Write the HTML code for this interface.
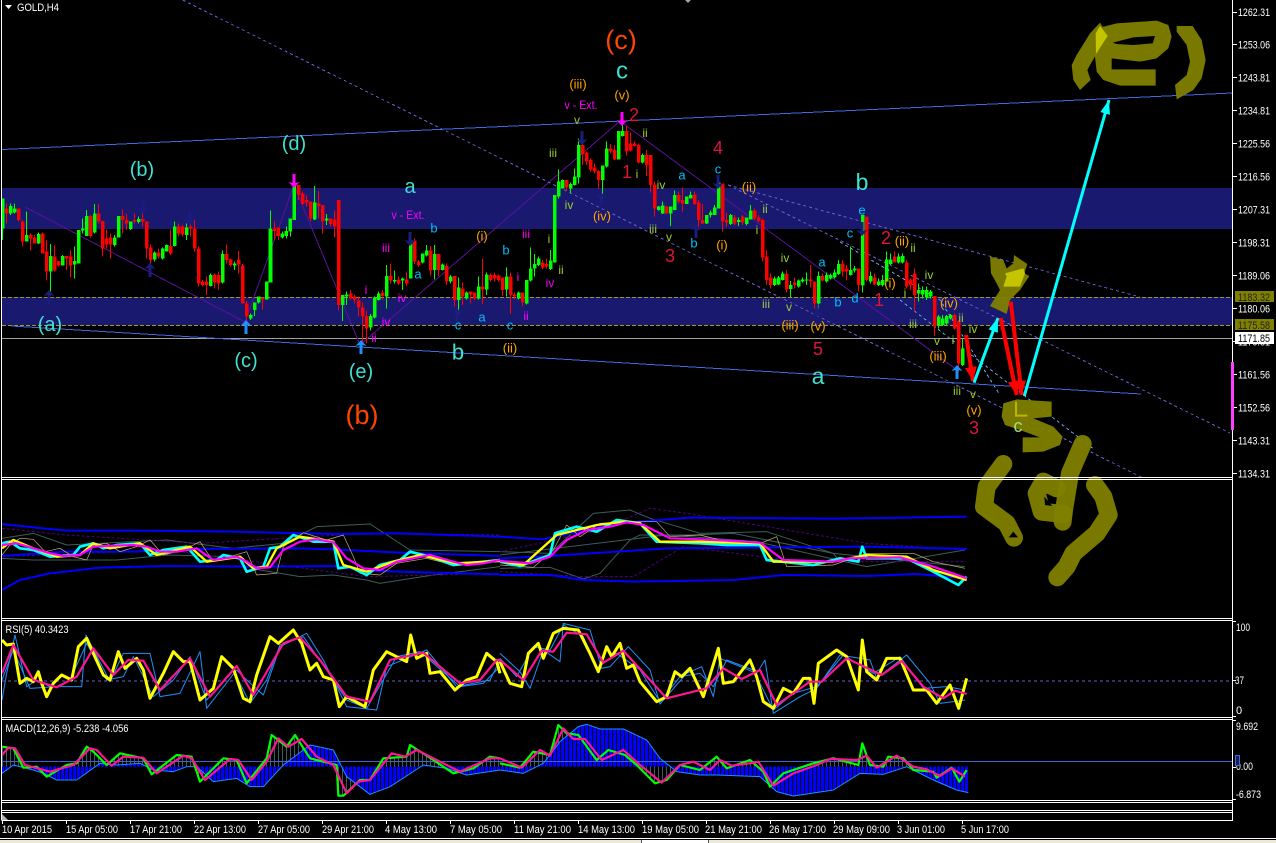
<!DOCTYPE html>
<html><head><meta charset="utf-8"><title>GOLD,H4</title>
<style>
html,body{margin:0;padding:0;background:#000;width:1276px;height:843px;overflow:hidden}
svg{display:block}
text{font-family:"Liberation Sans",sans-serif}
.c path{fill:none;shape-rendering:crispEdges}
.gb{stroke:#0f0;stroke-width:9.8}.rb{stroke:#f00;stroke-width:9.8}
.gw{stroke:#0f0;stroke-width:3.3}.rw{stroke:#f00;stroke-width:3.3}
.l text{text-anchor:middle;dominant-baseline:central}
.t{fill:#40e0d0;font-size:20px}.o{fill:#ff4500;font-size:27px}
.a{fill:#ffa500;font-size:13px}.r{fill:#dc143c;font-size:18px}
.y{fill:#9acd32;font-size:12px}.s{fill:#00bfff;font-size:13px}.m{fill:#f0f;font-size:12px}
.ax text{fill:#fff;font-size:11px}
.i path{fill:none;stroke-linejoin:round}
.ol{fill:#808000;opacity:.95}
.ols{fill:none;stroke:#808000;stroke-width:54;stroke-linecap:round;stroke-linejoin:round;opacity:.95}
.cr{shape-rendering:crispEdges}
</style></head><body>
<svg width="1276" height="843" viewBox="0 0 1276 843" xmlns="http://www.w3.org/2000/svg">
<defs>
<path id="up" d="M0 0L5.5 6L1.5 5V14H-1.5V5L-5.5 6Z"/>
<path id="dn" d="M0 0L5.5-6L1.5-5V-14H-1.5V-5L-5.5-6Z"/>
<pattern id="hb" patternUnits="userSpaceOnUse" width="12" height="12"><rect x="3" width="9" height="12" fill="#00f"/></pattern>
<pattern id="hg" patternUnits="userSpaceOnUse" width="12" height="12"><rect x="6" width="3" height="12" fill="#3d5c5c"/></pattern>
<marker id="mr" markerUnits="userSpaceOnUse" markerWidth="14" markerHeight="16" refX="14" refY="6" orient="auto"><path d="M0 0L14 6L0 12Z" fill="#f00"/></marker>
<marker id="mc" markerUnits="userSpaceOnUse" markerWidth="14" markerHeight="16" refX="14" refY="5" orient="auto"><path d="M0 0L14 5L0 10Z" fill="#0ff"/></marker>
</defs>
<rect width="1276" height="843" fill="#000"/>

<!-- bands -->
<rect x="2" y="188" width="1230" height="41" fill="#191970"/>
<rect x="2" y="297" width="1230" height="28.5" fill="#191970"/>
<path class="cr" d="M2 297.5H1232M2 325.5H1232" stroke="#a09a20" stroke-width="1" stroke-dasharray="4 2" fill="none"/>
<path class="cr" d="M2 338.5H1232" stroke="#a0a0a0" stroke-width="1" fill="none"/>

<!-- zigzag -->
<path class="cr" d="M25 207L245 322L294 185L360 345L620 121L957 370" fill="none" stroke="#5a109a" stroke-width="1"/>

<!-- dashed channels -->
<g class="cr" fill="none" stroke="#6a5acd" stroke-width="1" stroke-dasharray="3 3">
<path d="M182.7 0L1143 478"/><path d="M728 185L1140 297"/><path d="M728 185L1230 433"/>
<path d="M840 242L940 300L1000 395" stroke="#6aa8e8"/><path d="M900 300L1095 450" stroke="#6aa8e8"/>
</g>
<path class="cr" d="M2 149.5L1232 93M11 326L1141 394" fill="none" stroke="#4169e1" stroke-width="1"/>

<!-- candles -->
<g class="c">
<g transform="scale(.33333)">
<path class="gw" d="M8 595V720M32 610V645M44 610V640M80 635V725M116 697V732M188 765V797M224 740V835M248 655V700M260 630V708M284 612V700M344 705V740M392 665V690M416 650V670M464 755V785M488 742V778M500 733V755M524 665V740M560 670V720M812 632V760M848 695V715M860 680V715M872 655V710M944 558V660M980 642V675"/>
<path class="rw" d="M20 610V670M56 625V665M68 660V740M92 700V752M104 705V730M128 697V760M164 735V815M176 783V800M200 768V810M212 750V833M272 645V712M296 612V670M308 663V770M320 688V745M332 700V775M368 628V700M380 640V690M404 640V670M428 612V680M440 665V775M452 733V800M476 745V775M512 688V765M536 670V710M548 675V710M572 655V710M584 660V755M823 665V720M835 683V720M896 555V600M908 575V615M920 585V620M932 605V665M956 573V655M968 615V700M992 655V680M1004 632V712"/>
<path class="gb" d="M8 595V685M32 618V640M44 625V638M80 705V725M116 702V730M188 768V797M224 783V793M236 690V790M248 685V692M260 648V708M284 640V697M344 712V735M356 648V712M392 665V687M416 657V666M464 757V778M488 745V775M500 735V755M524 680V738M560 682V705M811 685V848M847 700V712M859 693V708M871 655V695M883 555V660M944 608V658M980 655V662"/>
<path class="rb" d="M20 625V640M56 625V660M68 665V725M92 705V715M104 712V730M128 700V760M164 770V812M176 783V797M200 768V775M212 770V797M272 648V708M296 640V665M308 663V745M320 715V733M332 712V733M368 648V660M380 660V670M404 660V665M428 657V665M440 665V745M452 742V780M476 758V770M512 738V760M536 680V700M548 680V703M572 680V685M584 685V745M823 685V693M835 683V708M896 555V585M908 580V612M920 600V607M932 605V655M956 610V618M968 615V665M992 655V672M1004 658V680"/>
</g>
<g transform="translate(0 240) scale(.33333)">
<path class="gw" d="M152 12V155M632 100V140M668 32V130M704 65V90M752 220V240M764 188V228M776 170V190M800 125V178M1028 165V243M1040 155V195M1112 222V272M1124 170V235M1136 155V182M1160 75V205M1184 92V130M1208 112V150"/>
<path class="rw" d="M140 0V122M596 20V140M608 120V140M620 110V165M644 100V145M656 95V150M680 13V70M692 55V80M716 33V100M728 72V190M740 183V260M788 172V208M1016 -120V212M1052 150V178M1064 165V190M1076 170V230M1088 187V305M1100 213V310M1148 150V180M1172 70V130M1196 110V135M1220 95V140M1244 -5V72M1256 60V80"/>
<path class="gb" d="M152 48V95M632 105V138M668 42V128M704 70V76M752 225V235M764 188V210M776 170V188M800 125V178M812 -30V128M1028 165V195M1040 163V170M1112 228V262M1124 172V232M1136 160V180M1160 108V170M1184 120V125M1208 116V122M1232 2V115"/>
<path class="rb" d="M140 35V95M596 25V130M608 125V135M620 125V135M644 105V128M656 105V130M680 42V60M692 58V75M716 58V73M728 77V190M740 190V230M788 172V178M1016 -120V195M1052 160V175M1064 170V178M1076 182V202M1088 202V230M1100 228V265M1148 158V168M1172 108V122M1196 118V130M1220 118V130M1244 2V65M1256 65V75"/>
</g>
<g transform="translate(420 0) scale(.33333)">
<path class="gw" d="M416 508V595M428 538V565M452 548V580M464 505V557M476 415V550M548 497V593M560 425V502M608 375V410M668 460V490M716 618V632M728 605V642M752 620V678M764 572V630M812 575V595M860 645V672M872 632V652M884 615V645M932 642V675M956 652V678M980 652V676M992 615V658"/>
<path class="rw" d="M440 540V575M488 405V495M500 455V495M512 475V515M524 490V520M536 510V567M572 432V460M584 435V480M620 378V467M632 397V455M644 425V440M656 430V490M680 450V528M692 465V578M704 545V650M740 618V642M776 575V610M788 563V635M824 575V615M836 600V690M848 612V672M908 550V695M920 638V680M944 645V675M968 645V675M1004 625V660M1016 645V668M1028 655V785"/>
<path class="gb" d="M416 545V590M428 540V565M452 552V565M464 530V555M476 435V533M548 497V540M560 445V500M596 393V478M608 393V408M668 465V488M716 620V630M728 617V640M752 620V640M764 585V630M800 590V612M812 585V595M860 645V670M872 638V645M884 622V645M896 548V625M932 645V672M956 660V666M980 652V672M992 632V658"/>
<path class="rb" d="M440 540V562M488 435V462M500 458V485M512 480V508M524 503V515M536 513V540M572 445V455M584 450V478M620 393V455M632 430V452M644 430V438M656 435V488M680 465V495M692 465V555M704 553V625M740 620V640M776 585V605M788 600V610M824 583V612M836 608V660M848 660V670M908 550V665M920 660V668M944 652V670M968 650V668M1004 632V655M1016 652V663M1028 660V772"/>
</g>
<g transform="translate(420 240) scale(.33333)">
<path class="gw" d="M8 40V70M20 15V50M44 15V118M68 70V92M92 105V130M116 113V220M140 155V178M176 110V178M200 98V165M260 82V170M296 155V178M320 120V193M332 22V125M344 42V110M356 50V78M392 30V90M1064 110V138M1076 108V135M1088 95V122M1112 123V172M1136 118V142M1148 112V128M1160 98V135M1196 95V205M1220 98V128M1232 100V118M1244 88V115M1256 60V105"/>
<path class="rw" d="M32 18V107M56 42V108M80 70V135M104 108V200M128 127V195M152 155V190M164 158V180M188 57V192M212 100V125M224 97V125M236 103V125M248 112V168M272 97V222M284 158V178M308 157V200M368 60V87M380 55V85M1040 30V135M1052 100V145M1100 90V158M1124 113V145M1172 75V142M1184 125V205M1208 100V125"/>
<path class="gb" d="M8 40V68M20 32V47M44 42V90M68 73V90M92 110V125M116 143V180M140 158V175M176 140V175M200 103V148M260 110V148M296 158V175M320 120V190M332 85V122M344 72V85M356 55V75M392 62V87M404 -135V68M1064 115V135M1076 113V133M1088 100V120M1112 135V147M1136 122V140M1148 118V125M1160 118V122M1196 108V190M1220 105V125M1232 105V115M1244 98V113M1256 72V102"/>
<path class="rb" d="M32 32V92M56 42V90M80 78V125M104 108V180M128 145V170M152 155V163M164 158V175M188 140V148M212 105V120M224 105V115M236 107V120M248 112V150M272 110V165M284 163V170M308 157V188M368 68V82M380 72V80M1040 50V120M1052 113V135M1100 102V148M1124 128V135M1172 118V125M1184 125V190M1208 108V122"/>
</g>
<g transform="translate(840 240) scale(.33333)">
<path class="gw" d="M32 20V107M44 78V98M68 -75V158M92 95V130M116 115V138M128 105V140M140 35V125M152 40V75M176 40V70M188 40V70M236 130V185M248 140V175M260 140V180M272 150V175M296 225V265M308 225V258M320 225V255M332 222V238M368 295V378"/>
<path class="rw" d="M8 60V110M20 75V122M56 85V155M80 -70V125M104 100V135M164 35V68M200 60V145M212 115V150M224 85V215M284 168V288M344 220V268M356 240V395"/>
<path class="gb" d="M32 90V105M44 85V92M68 -75V137M92 108V125M116 125V135M128 120V135M140 58V125M152 58V72M176 50V68M188 48V68M236 150V160M248 150V163M260 150V172M272 155V170M296 230V258M308 235V255M320 228V250M332 225V235M368 325V375"/>
<path class="rb" d="M8 70V95M20 85V95M56 85V135M80 -70V120M104 112V133M164 50V68M200 68V140M212 118V135M224 100V165M284 168V260M344 225V265M356 245V370"/>
</g>
</g>

<!-- arrows -->
<g fill="#1c1c80">
<use href="#dn" x="143" y="214"/><use href="#up" x="150" y="263"/><use href="#dn" x="190" y="225"/><use href="#up" x="49" y="290"/>
<use href="#dn" x="410" y="246"/><use href="#dn" x="582" y="145"/><use href="#up" x="601" y="192"/><use href="#dn" x="718" y="189"/>
<use href="#up" x="696" y="224"/><use href="#up" x="457" y="308"/><use href="#dn" x="817" y="318"/><use href="#dn" x="862" y="236"/>
</g>
<g fill="#1e90ff"><use href="#up" x="246" y="320"/><use href="#up" x="361" y="340"/><use href="#up" x="957" y="365"/></g>
<g fill="#f0f"><use href="#dn" x="294" y="188"/><use href="#dn" x="622" y="126"/></g>

<!-- wave labels -->
<g class="l">
<text class="o" x="621" y="40">(c)</text><text class="o" x="362" y="415">(b)</text>
<g class="t"><text x="50" y="325">(a)</text><text x="142" y="170">(b)</text><text x="246" y="361">(c)</text><text x="294" y="144">(d)</text><text x="361" y="372">(e)</text><text x="410" y="187">a</text><text x="458" y="352" style="font-size:22px">b</text><text x="622" y="71" style="font-size:24px">c</text><text x="862" y="182" style="font-size:23px">b</text><text x="818" y="376" style="font-size:23px">a</text></g>
<g class="a"><text x="578" y="84">(iii)</text><text x="622" y="95">(v)</text><text x="602" y="216">(iv)</text><text x="482" y="236">(i)</text><text x="749" y="187">(ii)</text><text x="722" y="245">(i)</text><text x="790" y="325">(iii)</text><text x="818" y="326">(v)</text><text x="510" y="348">(ii)</text><text x="902" y="241">(ii)</text><text x="890" y="283">(i)</text><text x="949" y="303">(iv)</text><text x="938" y="356">(iii)</text><text x="974" y="410">(v)</text></g>
<g class="r"><text x="634" y="115">2</text><text x="627" y="172">1</text><text x="718" y="148">4</text><text x="670" y="256">3</text><text x="818" y="349">5</text><text x="886" y="238">2</text><text x="879" y="300">1</text><text x="974" y="428">3</text></g>
<g class="y"><text x="577" y="120">v</text><text x="553" y="153">iii</text><text x="569" y="205">iv</text><text x="549" y="239">i</text><text x="561" y="270">ii</text><text x="645" y="133">ii</text><text x="637" y="174">i</text><text x="661" y="185">iv</text><text x="653" y="229">iii</text><text x="669" y="237">v</text><text x="765" y="209">ii</text><text x="757" y="230">i</text><text x="785" y="258">iv</text><text x="766" y="304">iii</text><text x="789" y="307">v</text><text x="913" y="248">ii</text><text x="929" y="275">iv</text><text x="905" y="293">i</text><text x="913" y="324">iii</text><text x="937" y="341">v</text><text x="953" y="340">i</text><text x="961" y="318">ii</text><text x="973" y="329">iv</text><text x="957" y="391">iii</text><text x="973" y="394">v</text></g>
<g class="s"><text x="434" y="228">b</text><text x="418" y="274">a</text><text x="506" y="250">b</text><text x="458" y="325">c</text><text x="482" y="317">a</text><text x="510" y="325">c</text><text x="682" y="175">a</text><text x="694" y="243">b</text><text x="718" y="169">c</text><text x="822" y="262">a</text><text x="838" y="302">b</text><text x="850" y="233">c</text><text x="855" y="298">d</text><text x="862" y="210">e</text></g>
<g class="m"><text x="408" y="215" textLength="33" lengthAdjust="spacingAndGlyphs">v - Ext.</text><text x="581" y="105" textLength="33" lengthAdjust="spacingAndGlyphs">v - Ext.</text><text x="386" y="248">iii</text><text x="366" y="290">i</text><text x="402" y="298">iv</text><text x="386" y="322">iv</text><text x="374" y="338">ii</text><text x="518" y="277">i</text><text x="550" y="283">iv</text><text x="526" y="234">iii</text><text x="526" y="316">ii</text></g>
</g>

<!-- indicator panel -->
<g class="i" transform="translate(0 480) scale(.33333)">
<g stroke="#3d5c5c" stroke-width="3"><path d="M6 235L100 240L250 240L350 240L500 225L700 230L780 270L900 290L1000 285L1100 300L1140 310L1300 285L1500 260"/><path d="M6 175L100 160L200 195L500 180L700 205L850 190L950 140L1110 132L1230 210L1500 215"/></g>
<g stroke="#4b0082" stroke-width="3" stroke-dasharray="9 6"><path d="M6 145L200 165L600 190L1100 160L1500 165"/><path d="M6 230L500 210L1100 290L1500 280"/></g>
<g stroke="#00f" stroke-width="6"><path d="M6 132L130 145L200 152L400 152L700 155L1000 162L1200 160L1500 170"/><path d="M6 228L200 215L400 215L600 207L900 205L1000 208L1200 218L1500 228"/><path d="M6 330L60 300L150 280L300 263L500 258L800 260L1000 258L1100 272L1300 278L1500 283"/></g>
<path stroke="#c8b878" stroke-width="2" d="M6 225L30 195L60 175L100 178L135 215L180 205L220 230L260 240L280 195L320 190L360 215L410 200L450 180L490 225L550 210L600 185L640 245L690 230L740 215L770 285L830 280L850 200L910 158L980 180L1030 165L1060 230L1080 280L1140 285L1190 250L1280 235L1340 250L1400 250L1500 240"/>
<path stroke="#0ff" stroke-width="8" d="M6 190L30 185L60 205L100 210L150 230L220 225L240 200L280 190L310 205L350 195L420 190L450 225L490 210L560 200L600 245L650 240L670 225L720 235L740 275L790 260L810 205L840 200L880 165L940 185L1000 185L1015 265L1050 260L1100 285L1140 255L1200 240L1230 215L1290 230L1360 255L1500 240"/>
<path stroke="#ff0" stroke-width="7" d="M6 205L40 180L100 205L170 230L240 225L280 190L330 205L420 190L470 225L570 200L620 245L720 230L760 265L800 260L830 205L900 170L1000 185L1030 255L1100 275L1180 245L1260 225L1370 250L1500 243"/>
<path stroke="#f0f" stroke-width="6.5" d="M6 195L50 190L100 205L150 220L190 228L240 225L280 200L320 198L400 195L440 200L480 215L530 215L590 205L640 240L710 230L740 245L770 265L810 262L850 210L900 185L950 178L1000 187L1040 235L1090 265L1140 270L1190 245L1290 225L1360 245L1400 255L1450 250L1500 240"/>
</g>
<g class="i" transform="translate(500 480) scale(.33333)">
<g stroke="#3d5c5c" stroke-width="3"><path d="M0 265L150 262L250 297L300 280L390 180L420 165L570 165L700 160L1000 220L1020 245"/><path d="M0 215L150 220L280 100L390 90L450 115L600 160L800 155L1000 220L1395 260"/><path d="M0 225L500 165L770 185L1100 260L1395 210"/></g>
<g stroke="#4b0082" stroke-width="3" stroke-dasharray="9 6"><path d="M0 215L300 150L450 85L560 100L1100 190L1395 210"/><path d="M0 275L250 290L400 290L550 200L900 245L1395 245"/></g>
<g stroke="#00f" stroke-width="6"><path d="M0 170L130 178L350 130L570 113L1000 116L1400 110"/><path d="M0 235L150 228L500 205L1100 200L1400 207"/><path d="M0 285L150 285L250 300L400 305L700 300L850 285L1100 288L1250 282L1400 295"/></g>
<path stroke="#c8b878" stroke-width="2" d="M0 255L100 262L160 210L200 135L240 170L300 130L400 125L470 125L510 170L600 165L660 180L770 195L830 170L860 260L1000 255L1100 220L1240 220L1300 245L1395 265"/>
<path stroke="#0ff" stroke-width="8" d="M0 245L60 258L150 225L165 160L230 140L290 155L350 120L420 130L470 185L600 190L680 195L780 195L800 240L940 255L1020 235L1075 245L1087 200L1100 235L1220 235L1300 275L1375 315L1400 290"/>
<path stroke="#ff0" stroke-width="7" d="M0 243L70 255L170 165L290 135L370 125L420 130L480 185L600 185L780 190L820 245L1000 245L1100 225L1220 230L1300 270L1400 300"/>
<path stroke="#f0f" stroke-width="6.5" d="M0 243L90 250L150 230L200 180L260 150L330 140L380 127L430 135L510 175L600 178L680 182L780 188L850 240L1000 245L1050 235L1200 232L1300 260L1400 295"/>
</g>

<!-- RSI -->
<path d="M2 681H1232" stroke="#6a5acd" stroke-width="1" stroke-dasharray="3 3"/>
<g class="i" transform="translate(0 480) scale(.33333)">
<path stroke="#1e90ff" stroke-width="3" d="M6 660L20 580L45 465L80 620L110 600L150 620L245 620L258 465L330 605L370 520L450 520L480 650L540 640L600 515L620 685L710 570L740 600L790 645L840 500L920 460L970 540L1040 680L1130 690L1160 560L1280 510L1370 620L1470 600L1500 540"/>
<path stroke="#1e90ff" stroke-width="3" d="M6 600L40 510L90 625L170 620L210 600L260 490L320 600L370 590L400 530L460 650L520 600L570 530L620 660L700 570L750 670L800 600L840 495L910 470L980 570L1040 660L1100 685L1190 530L1260 515L1380 620L1450 610L1500 560"/>
<path stroke="#ff0" stroke-width="9" d="M6 480L20 495L40 492L60 610L80 595L100 605L115 575L125 610L140 650L160 610L185 585L215 600L235 500L260 475L280 520L310 585L330 600L355 515L375 565L410 535L430 570L450 655L490 580L520 515L550 545L570 545L600 660L640 625L665 530L700 565L730 655L750 665L770 585L810 470L835 490L880 450L905 490L930 570L950 550L970 590L1000 600L1018 680L1040 650L1095 680L1120 570L1160 515L1220 545L1232 465L1250 535L1280 520L1290 580L1320 575L1365 630L1400 600L1430 590L1460 520L1490 545L1500 580"/>
<path stroke="#ff1493" stroke-width="6.5" d="M6 580L40 495L60 530L100 600L170 622L230 590L280 505L340 585L385 540L430 542L480 630L570 535L630 650L710 558L760 645L850 490L900 472L960 540L1040 650L1110 665L1170 540L1270 518L1380 610L1440 600L1490 540L1500 540"/>
</g>
<g class="i" transform="translate(500 480) scale(.33333)">
<path stroke="#1e90ff" stroke-width="3" d="M0 520L60 575L90 625L130 510L180 545L190 430L270 450L305 565L330 560L385 500L450 570L480 672L560 580L605 560L640 650L660 535L770 580L795 540L820 700L900 650L950 625L1020 525L1110 540L1130 595L1220 525L1290 610L1320 670L1395 660"/>
<path stroke="#1e90ff" stroke-width="3" d="M0 535L50 590L100 500L150 510L190 435L250 470L290 565L350 520L420 570L480 665L540 590L600 580L640 620L680 540L760 570L820 690L880 640L950 620L1030 525L1120 580L1200 530L1270 625L1340 620L1395 630"/>
<path stroke="#ff0" stroke-width="9" d="M0 545L30 610L65 620L85 520L115 490L130 535L160 460L190 445L235 450L270 520L295 575L320 500L335 530L360 490L380 565L400 555L420 605L470 665L500 650L525 575L545 590L570 565L610 650L655 505L670 610L700 605L750 540L770 590L790 665L820 685L850 625L880 640L910 595L930 595L942 670L955 550L1010 510L1040 530L1075 630L1087 480L1100 575L1130 600L1160 535L1200 535L1240 630L1280 630L1310 670L1350 615L1376 685L1400 595"/>
<path stroke="#ff1493" stroke-width="6.5" d="M0 540L70 600L125 512L160 515L200 458L260 463L310 548L370 512L500 655L620 625L670 565L725 597L780 570L830 675L930 605L965 605L1040 535L1145 585L1205 543L1270 620L1330 655L1365 632L1400 642"/>
</g>

<!-- MACD -->
<g transform="translate(0 715) scale(.33333)">
<path fill="url(#hg)" d="M6 95L40 100L70 158L110 155L140 185L200 150L230 145L260 95L280 110L320 150L360 115L430 130L455 178L530 120L575 125L600 200L670 130L710 135L740 205L800 130L815 60L860 95L885 60L930 130L1010 150L1015 242L1030 242L1080 195L1110 195L1150 130L1220 125L1230 90L1300 135L1360 175L1420 160L1470 125L1500 130L1500 155L6 155Z"/>
<path fill="url(#hb)" d="M6 175L40 150L100 165L130 175L170 195L230 195L300 145L350 150L420 145L460 165L520 170L560 155L590 155L640 200L710 190L750 215L790 215L850 150L930 90L1000 105L1040 185L1110 238L1170 215L1270 150L1340 160L1400 180L1500 165L1500 155L6 155Z"/>
</g>
<g transform="translate(500 715) scale(.33333)">
<path fill="url(#hg)" d="M0 145L60 158L100 110L150 120L175 30L200 55L235 60L290 135L325 105L375 120L410 150L465 205L500 195L540 150L600 165L650 125L680 160L750 135L790 170L810 215L850 175L940 145L1000 130L1075 150L1087 85L1110 150L1150 155L1165 125L1210 130L1240 165L1300 170L1310 188L1355 158L1378 200L1404 165L1404 155L0 155Z"/>
<path fill="url(#hb)" d="M0 165L70 175L130 145L180 80L235 35L260 28L300 42L370 42L440 75L480 130L530 170L600 180L650 180L780 185L830 230L880 243L1000 225L1080 175L1150 178L1220 155L1300 195L1370 225L1405 233L1405 155L0 155Z"/>
</g>
<path d="M2 761.5H1232" stroke="#3f66d0" stroke-width="1"/>
<g class="i" transform="translate(0 715) scale(.33333)">
<path stroke="#1e90ff" stroke-width="3" d="M6 175L40 150L100 165L130 175L170 195L230 195L300 145L350 150L420 145L460 165L520 170L560 155L590 155L640 200L710 190L750 215L790 215L850 150L930 90L1000 105L1040 185L1110 238L1170 215L1270 150L1340 160L1400 180L1500 165"/>
<path stroke="#0f0" stroke-width="6.5" d="M6 95L40 100L70 158L110 155L140 185L200 150L230 145L260 95L280 110L320 150L360 115L430 130L455 178L530 120L575 125L600 200L670 130L710 135L740 205L800 130L815 60L860 95L885 60L930 130L1010 150L1015 242L1030 242L1080 195L1110 195L1150 130L1220 125L1230 90L1300 135L1360 175L1420 160L1470 125L1500 130"/>
<path stroke="#ff1493" stroke-width="6.5" d="M6 120L25 98L45 100L75 150L150 170L220 150L270 100L290 105L335 152L370 125L430 128L470 175L550 122L575 130L615 195L690 132L715 135L755 195L800 140L835 70L865 95L905 72L950 125L1000 150L1040 235L1075 200L1110 195L1175 115L1215 125L1250 105L1310 135L1380 170L1470 130L1500 130"/>
</g>
<g class="i" transform="translate(500 715) scale(.33333)">
<path stroke="#1e90ff" stroke-width="3" d="M0 165L70 175L130 145L180 80L235 35L260 28L300 42L370 42L440 75L480 130L530 170L600 180L650 180L780 185L830 230L880 243L1000 225L1080 175L1150 178L1220 155L1300 195L1370 225L1405 233"/>
<path stroke="#0f0" stroke-width="6.5" d="M0 145L60 158L100 110L150 120L175 30L200 55L235 60L290 135L325 105L375 120L410 150L465 205L500 195L540 150L600 165L650 125L680 160L750 135L790 170L810 215L850 175L940 145L1000 130L1075 150L1087 85L1110 150L1150 155L1165 125L1210 130L1240 165L1300 170L1310 188L1355 158L1378 200L1400 165"/>
<path stroke="#ff1493" stroke-width="6.5" d="M0 130L65 158L120 105L150 122L190 40L220 72L255 72L305 135L370 105L420 150L485 203L540 150L580 140L630 165L660 135L695 152L750 145L775 140L820 212L880 175L950 150L990 132L1070 135L1100 122L1130 158L1190 122L1240 155L1280 163L1320 183L1355 160L1395 185"/>
</g>

<!-- hand drawn overlays -->
<g transform="translate(840 0) scale(.33333)">
<path class="ol" d="M780 68L800 100L770 160L742 210L752 240L720 270L700 240L695 195L710 165L750 100Z"/>
<path class="ol" fill-rule="evenodd" d="M770 85L830 70L950 62L985 75L995 110L985 145L950 175L900 185L815 175L815 208L947 208L947 257L840 257L790 240L770 215L765 170L770 100ZM818 128L880 112L945 108L938 130L880 135L830 132Z"/>
<path class="ol" d="M1010 78L1058 78L1085 120L1097 180L1085 235L1060 270L1010 298L1005 255L1040 225L1050 185L1040 135L1010 95Z"/>
<path d="M780 78L803 108L768 162L767 100Z" fill="#c4c400"/>
</g>
<g transform="translate(840 240) scale(.33333)">
<path class="ol" d="M450 50L490 60L500 85L520 70L522 45L562 72L553 100L568 108L540 150L510 180L500 222L450 198L480 150L470 130L453 100Z"/>
<path d="M495 100L550 85L555 100L540 140L490 140L500 110Z" fill="#c4c400"/>
<path class="ol" d="M490 490L530 478L635 485L635 530L580 535L640 560L668 590L660 615L610 635L548 637L548 592L600 592L540 570L495 555L485 530Z"/>
<path d="M528 485V527H562" fill="none" stroke="#b8b800" stroke-width="6"/>
<path class="ols" d="M490 672L440 740L432 800L500 850L522 893"/>
<path class="ols" d="M728 612L690 700L672 810L668 845"/>
<path class="ols" d="M650 745L610 725L590 760L605 815L670 822"/>
<path class="ols" d="M765 735L790 770L806 825L770 880L700 940L680 980L652 1012"/>
<path d="M613 770L637 798L615 795Z" fill="#000"/><path d="M520 875L534 892H506Z" fill="#000"/>
</g>
<text x="1018" y="426" fill="#a0e080" font-size="18" text-anchor="middle" dominant-baseline="central">c</text>

<!-- projection arrows -->
<g fill="none" stroke-width="4">
<path d="M966 335L973 381" stroke="#f00" marker-end="url(#mr)"/>
<path d="M1000.7 318L1016.7 395" stroke="#f00" marker-end="url(#mr)"/>
<path d="M1010.7 301.7L1021.7 395" stroke="#f00" marker-end="url(#mr)"/>
<path d="M974 382.7L998 318" stroke="#0ff" stroke-width="3" marker-end="url(#mc)"/>
<path d="M1024.3 396L1109 100" stroke="#0ff" stroke-width="3" marker-end="url(#mc)"/>
</g>

<!-- frames -->
<g stroke="#fff" stroke-width="1" fill="none" shape-rendering="crispEdges">
<path d="M1.5 0V820.5M1232.5 0V821"/>
<path d="M2 477.5H1233M2 479.5H1233M2 618.5H1233M2 620.5H1233M2 717.5H1233M2 719.5H1233M2 800.5H1233M2 802.5H1233M2 810.5H1233M2 812.5H1233M2 820.5H1233"/>
<path d="M1233 12.5h4M1233 44.5h4M1233 77.5h4M1233 110.5h4M1233 143.5h4M1233 176.5h4M1233 209.5h4M1233 242.5h4M1233 275.5h4M1233 308.5h4M1233 341.5h4M1233 374.5h4M1233 407.5h4M1233 440.5h4M1233 473.5h4M1233 621.5h3M1233 680.5h3M1233 716.5h3M1233 720.5h3M1233 767.5h3M1233 799.5h3"/>
<path d="M2.5 821v3M66.5 821v3M130.5 821v3M194.5 821v3M258.5 821v3M322.5 821v3M386.5 821v3M450.5 821v3M514.5 821v3M578.5 821v3M642.5 821v3M706.5 821v3M770.5 821v3M834.5 821v3M898.5 821v3M962.5 821v3"/>
</g>
<rect x="1231" y="362" width="3" height="68" fill="#ff40ff"/>
<path d="M2 814L2 820L8 820Z" fill="#aeb6bd"/>
<path d="M685 0H691L688 3Z" fill="#a0a0a8"/>
<path d="M5 5H12L8.5 9Z" fill="#fff"/>
<text x="17" y="11" fill="#fff" font-size="11" textLength="42" lengthAdjust="spacingAndGlyphs">GOLD,H4</text>

<!-- price axis -->
<g class="ax">
<text x="1238" y="16" textLength="32" lengthAdjust="spacingAndGlyphs">1262.31</text>
<text x="1238" y="48.5" textLength="32" lengthAdjust="spacingAndGlyphs">1253.06</text>
<text x="1238" y="81.5" textLength="32" lengthAdjust="spacingAndGlyphs">1243.81</text>
<text x="1238" y="114.5" textLength="32" lengthAdjust="spacingAndGlyphs">1234.81</text>
<text x="1238" y="147.5" textLength="32" lengthAdjust="spacingAndGlyphs">1225.56</text>
<text x="1238" y="180.5" textLength="32" lengthAdjust="spacingAndGlyphs">1216.56</text>
<text x="1238" y="213.5" textLength="32" lengthAdjust="spacingAndGlyphs">1207.31</text>
<text x="1238" y="246.5" textLength="32" lengthAdjust="spacingAndGlyphs">1198.31</text>
<text x="1238" y="279.5" textLength="32" lengthAdjust="spacingAndGlyphs">1189.06</text>
<text x="1238" y="312.5" textLength="32" lengthAdjust="spacingAndGlyphs">1180.06</text>
<text x="1238" y="345.5" textLength="32" lengthAdjust="spacingAndGlyphs">1170.81</text>
<text x="1238" y="378.5" textLength="32" lengthAdjust="spacingAndGlyphs">1161.56</text>
<text x="1238" y="411.5" textLength="32" lengthAdjust="spacingAndGlyphs">1152.56</text>
<text x="1238" y="444.5" textLength="32" lengthAdjust="spacingAndGlyphs">1143.31</text>
<text x="1238" y="477.5" textLength="32" lengthAdjust="spacingAndGlyphs">1134.31</text>
</g>
<rect x="1235" y="291" width="39" height="11" fill="#808000"/><text x="1238" y="301" fill="#222" font-size="11" textLength="32" lengthAdjust="spacingAndGlyphs">1183.32</text>
<rect x="1235" y="319" width="39" height="11" fill="#808000"/><text x="1238" y="329" fill="#222" font-size="11" textLength="32" lengthAdjust="spacingAndGlyphs">1175.58</text>
<rect x="1235" y="332" width="39" height="12" fill="#fff"/><text x="1238" y="342" fill="#000" font-size="11" textLength="32" lengthAdjust="spacingAndGlyphs">1171.85</text>

<g class="ax">
<text x="1236" y="631" textLength="14" lengthAdjust="spacingAndGlyphs">100</text>
<text x="1235" y="684" textLength="9" lengthAdjust="spacingAndGlyphs">37</text>
<text x="1236" y="714">0</text>
<text x="1236" y="730" textLength="22" lengthAdjust="spacingAndGlyphs">9.692</text>
<text x="1236" y="770" textLength="17" lengthAdjust="spacingAndGlyphs">0.00</text>
<text x="1236" y="798" textLength="25" lengthAdjust="spacingAndGlyphs">-6.873</text>
<text x="5.5" y="633" textLength="63" lengthAdjust="spacingAndGlyphs">RSI(5) 40.3423</text>
<text x="5.5" y="732" textLength="123" lengthAdjust="spacingAndGlyphs">MACD(12,26,9) -5.238 -4.056</text>
</g>
<rect x="1235.5" y="755.5" width="4" height="10" fill="#10205a" stroke="#4169e1"/>

<!-- time axis -->
<g class="ax">
<text x="2" y="833" textLength="50" lengthAdjust="spacingAndGlyphs">10 Apr 2015</text>
<text x="66" y="833" textLength="52" lengthAdjust="spacingAndGlyphs">15 Apr 05:00</text>
<text x="130" y="833" textLength="52" lengthAdjust="spacingAndGlyphs">17 Apr 21:00</text>
<text x="194" y="833" textLength="52" lengthAdjust="spacingAndGlyphs">22 Apr 13:00</text>
<text x="258" y="833" textLength="52" lengthAdjust="spacingAndGlyphs">27 Apr 05:00</text>
<text x="322" y="833" textLength="52" lengthAdjust="spacingAndGlyphs">29 Apr 21:00</text>
<text x="385" y="833" textLength="52" lengthAdjust="spacingAndGlyphs">4 May 13:00</text>
<text x="450" y="833" textLength="52" lengthAdjust="spacingAndGlyphs">7 May 05:00</text>
<text x="514" y="833" textLength="57" lengthAdjust="spacingAndGlyphs">11 May 21:00</text>
<text x="578" y="833" textLength="57" lengthAdjust="spacingAndGlyphs">14 May 13:00</text>
<text x="642" y="833" textLength="57" lengthAdjust="spacingAndGlyphs">19 May 05:00</text>
<text x="705" y="833" textLength="57" lengthAdjust="spacingAndGlyphs">21 May 21:00</text>
<text x="769" y="833" textLength="57" lengthAdjust="spacingAndGlyphs">26 May 17:00</text>
<text x="833" y="833" textLength="57" lengthAdjust="spacingAndGlyphs">29 May 09:00</text>
<text x="897" y="833" textLength="48" lengthAdjust="spacingAndGlyphs">3 Jun 01:00</text>
<text x="961" y="833" textLength="48" lengthAdjust="spacingAndGlyphs">5 Jun 17:00</text>
</g>

<!-- bottom bar -->
<rect x="0" y="838" width="1276" height="1" fill="#fff"/>
<rect x="0" y="840" width="1276" height="3" fill="#ece9d8"/>
<rect x="642" y="840" width="66" height="3" fill="#fff"/>
<path d="M641.5 840V843M708.5 840V843" stroke="#555" stroke-width="1"/>
</svg>
</body></html>
